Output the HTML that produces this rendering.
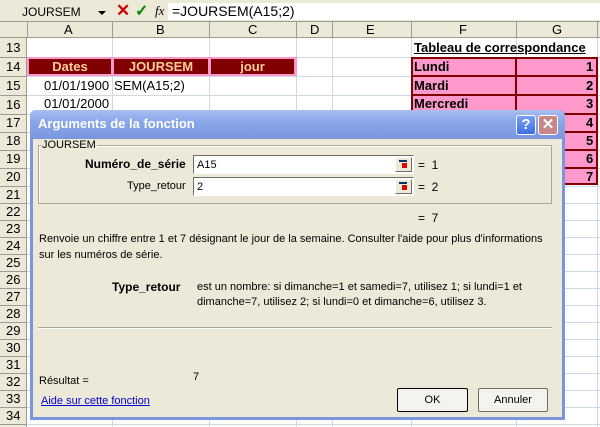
<!DOCTYPE html><html><head><style>
*{margin:0;padding:0;box-sizing:border-box}
body{width:600px;height:427px;overflow:hidden;background:#fff;font-family:"Liberation Sans",Arial,sans-serif;position:relative}
.a{position:absolute}
.t{font-size:11px;color:#000;white-space:nowrap}
.cell{position:absolute;font-size:13px;white-space:nowrap}
.btnicon{position:absolute;width:17px;height:15px;background:#ece9d8;border-left:1px solid #fff;border-top:1px solid #fff;border-right:1px solid #716f64;border-bottom:1px solid #716f64}
</style></head><body>
<div class="a" style="left:0;top:0;width:600px;height:3px;background:#ece9d8"></div>
<div class="a" style="left:0;top:3px;width:600px;height:18px;background:#ece9d8"></div>
<div class="a t" style="left:22px;top:5px;font-size:12px">JOURSEM</div>
<div class="a" style="left:98px;top:11px;border-left:4px solid transparent;border-right:4px solid transparent;border-top:4px solid #000"></div>
<div class="a" style="left:116px;top:1px;font-size:17px;color:#c00;font-weight:bold">✕</div>
<div class="a" style="left:135px;top:1px;font-size:16px;color:#080;font-weight:bold">✓</div>
<div class="a" style="left:155px;top:3px;font-size:13px;font-style:italic;font-family:'Liberation Serif',serif">fx</div>
<div class="a" style="left:168px;top:3px;width:432px;height:17px;background:#fff"></div>
<div class="a" style="left:172px;top:3px;font-size:14px">=JOURSEM(A15;2)</div>
<div class="a" style="left:0;top:21px;width:600px;height:17px;background:#ece9d8;border-bottom:1px solid #9d9c94;border-top:1px solid #9d9c94"></div>
<div class="a" style="left:0;top:38px;width:27px;height:389px;background:#ece9d8;border-right:1px solid #9d9c94"></div>
<svg class="a" style="left:0;top:0" width="600" height="427">
<g stroke="#d0d7e5" stroke-width="1">
<line x1="27" y1="57.5" x2="600" y2="57.5"/><line x1="27" y1="76.5" x2="600" y2="76.5"/><line x1="27" y1="95.5" x2="600" y2="95.5"/><line x1="27" y1="114.5" x2="600" y2="114.5"/>
<line x1="27" y1="132.5" x2="600" y2="132.5"/><line x1="27" y1="150.5" x2="600" y2="150.5"/><line x1="27" y1="168.5" x2="600" y2="168.5"/><line x1="27" y1="186.5" x2="600" y2="186.5"/><line x1="27" y1="203.5" x2="600" y2="203.5"/><line x1="27" y1="220.5" x2="600" y2="220.5"/><line x1="27" y1="237.5" x2="600" y2="237.5"/><line x1="27" y1="254.5" x2="600" y2="254.5"/><line x1="27" y1="271.5" x2="600" y2="271.5"/><line x1="27" y1="288.5" x2="600" y2="288.5"/><line x1="27" y1="305.5" x2="600" y2="305.5"/><line x1="27" y1="322.5" x2="600" y2="322.5"/><line x1="27" y1="339.5" x2="600" y2="339.5"/><line x1="27" y1="356.5" x2="600" y2="356.5"/><line x1="27" y1="373.5" x2="600" y2="373.5"/><line x1="27" y1="390.5" x2="600" y2="390.5"/><line x1="27" y1="407.5" x2="600" y2="407.5"/><line x1="27" y1="424.5" x2="600" y2="424.5"/>
<line x1="112.5" y1="38" x2="112.5" y2="427"/><line x1="209.5" y1="38" x2="209.5" y2="427"/><line x1="296.5" y1="38" x2="296.5" y2="427"/><line x1="332.5" y1="38" x2="332.5" y2="427"/><line x1="411.5" y1="38" x2="411.5" y2="427"/><line x1="516.5" y1="38" x2="516.5" y2="427"/><line x1="597.5" y1="38" x2="597.5" y2="427"/>
</g>
<g stroke="#9d9c94"><line x1="27.5" y1="21" x2="27.5" y2="38"/><line x1="112.5" y1="21" x2="112.5" y2="38"/><line x1="209.5" y1="21" x2="209.5" y2="38"/><line x1="296.5" y1="21" x2="296.5" y2="38"/><line x1="332.5" y1="21" x2="332.5" y2="38"/><line x1="411.5" y1="21" x2="411.5" y2="38"/><line x1="516.5" y1="21" x2="516.5" y2="38"/><line x1="597.5" y1="21" x2="597.5" y2="38"/>
<line x1="0" y1="57.5" x2="27" y2="57.5"/><line x1="0" y1="76.5" x2="27" y2="76.5"/><line x1="0" y1="95.5" x2="27" y2="95.5"/><line x1="0" y1="114.5" x2="27" y2="114.5"/><line x1="0" y1="132.5" x2="27" y2="132.5"/><line x1="0" y1="150.5" x2="27" y2="150.5"/><line x1="0" y1="168.5" x2="27" y2="168.5"/><line x1="0" y1="186.5" x2="27" y2="186.5"/><line x1="0" y1="203.5" x2="27" y2="203.5"/><line x1="0" y1="220.5" x2="27" y2="220.5"/><line x1="0" y1="237.5" x2="27" y2="237.5"/><line x1="0" y1="254.5" x2="27" y2="254.5"/><line x1="0" y1="271.5" x2="27" y2="271.5"/><line x1="0" y1="288.5" x2="27" y2="288.5"/><line x1="0" y1="305.5" x2="27" y2="305.5"/><line x1="0" y1="322.5" x2="27" y2="322.5"/><line x1="0" y1="339.5" x2="27" y2="339.5"/><line x1="0" y1="356.5" x2="27" y2="356.5"/><line x1="0" y1="373.5" x2="27" y2="373.5"/><line x1="0" y1="390.5" x2="27" y2="390.5"/><line x1="0" y1="407.5" x2="27" y2="407.5"/><line x1="0" y1="424.5" x2="27" y2="424.5"/></g>
</svg>
<div class="cell" style="left:64px;top:22px">A</div><div class="cell" style="left:156px;top:22px">B</div><div class="cell" style="left:248px;top:22px">C</div><div class="cell" style="left:310px;top:22px">D</div><div class="cell" style="left:366px;top:22px">E</div><div class="cell" style="left:459px;top:22px">F</div><div class="cell" style="left:552px;top:22px">G</div>
<div class="cell" style="left:6px;top:40px">13</div><div class="cell" style="left:6px;top:59px">14</div><div class="cell" style="left:6px;top:78px">15</div><div class="cell" style="left:6px;top:97px">16</div><div class="cell" style="left:6px;top:115px">17</div>
<div class="cell" style="left:6px;top:133px">18</div><div class="cell" style="left:6px;top:151px">19</div><div class="cell" style="left:6px;top:169px">20</div><div class="cell" style="left:6px;top:187px">21</div><div class="cell" style="left:6px;top:204px">22</div><div class="cell" style="left:6px;top:221px">23</div><div class="cell" style="left:6px;top:238px">24</div><div class="cell" style="left:6px;top:255px">25</div><div class="cell" style="left:6px;top:272px">26</div><div class="cell" style="left:6px;top:289px">27</div>
<div class="cell" style="left:6px;top:306px">28</div><div class="cell" style="left:6px;top:323px">29</div><div class="cell" style="left:6px;top:340px">30</div><div class="cell" style="left:6px;top:357px">31</div><div class="cell" style="left:6px;top:374px">32</div><div class="cell" style="left:6px;top:391px">33</div><div class="cell" style="left:6px;top:408px">34</div>
<div class="a" style="left:27px;top:57px;width:270px;height:19px;background:#ff99cc"></div>
<div class="a" style="left:29px;top:59px;width:82px;height:15px;background:#800000;color:#ffcc99;font-weight:bold;font-size:13px;text-align:center">Dates</div>
<div class="a" style="left:114px;top:59px;width:94px;height:15px;background:#800000;color:#ffcc99;font-weight:bold;font-size:13px;text-align:center">JOURSEM</div>
<div class="a" style="left:211px;top:59px;width:83px;height:15px;background:#800000;color:#ffcc99;font-weight:bold;font-size:13px;text-align:center">jour</div>
<div class="cell" style="left:44px;top:78px">01/01/1900</div><div class="cell" style="left:114px;top:78px">SEM(A15;2)</div>
<div class="cell" style="left:44px;top:96px">01/01/2000</div>
<div class="cell" style="left:414px;top:40px;font-weight:bold;text-decoration:underline">Tableau de correspondance</div>
<div class="a" style="left:411px;top:57px;width:187px;height:128px;background:#ff99cc;border:2px solid #800000"></div>
<svg class="a" style="left:0;top:0" width="600" height="427"><g stroke="#800000" stroke-width="2"><line x1="516" y1="57" x2="516" y2="185"/><line x1="411" y1="76" x2="598" y2="76"/><line x1="411" y1="95" x2="598" y2="95"/><line x1="411" y1="114" x2="598" y2="114"/><line x1="411" y1="132" x2="598" y2="132"/><line x1="411" y1="150" x2="598" y2="150"/><line x1="411" y1="168" x2="598" y2="168"/></g></svg>
<div class="cell" style="left:414px;top:59px;font-weight:bold">Lundi</div><div class="cell" style="left:414px;top:78px;font-weight:bold">Mardi</div><div class="cell" style="left:414px;top:96px;font-weight:bold">Mercredi</div>
<div class="cell" style="left:586px;top:59px;font-weight:bold">1</div><div class="cell" style="left:586px;top:78px;font-weight:bold">2</div><div class="cell" style="left:586px;top:96px;font-weight:bold">3</div><div class="cell" style="left:586px;top:115px;font-weight:bold">4</div><div class="cell" style="left:586px;top:133px;font-weight:bold">5</div><div class="cell" style="left:586px;top:151px;font-weight:bold">6</div><div class="cell" style="left:586px;top:169px;font-weight:bold">7</div>
<div class="a" style="left:30px;top:110px;width:535px;height:310px;background:#ece9d8;border:3px solid #7a96df;border-top:none;border-radius:6px 6px 0 0"></div>
<div class="a" style="left:30px;top:110px;width:535px;height:29px;border-radius:7px 7px 0 0;background:linear-gradient(#a9bdf0,#8aa7ea 40%,#7a96df)"></div>
<div class="a" style="left:38px;top:116px;color:#fff;font-weight:bold;font-size:13px">Arguments de la fonction</div>
<div class="a" style="left:516px;top:115px;width:20px;height:20px;border-radius:3px;border:1px solid #fff;background:linear-gradient(#7aa0f6,#3c6fe0);color:#fff;font-weight:bold;font-size:15px;text-align:center;line-height:18px">?</div>
<div class="a" style="left:538px;top:115px;width:20px;height:20px;border-radius:3px;border:1px solid #fff;background:#c8868a;color:#fff;font-weight:bold;font-size:15px;text-align:center;line-height:18px">✕</div>
<div class="a" style="left:38px;top:145px;width:514px;height:59px;border:1px solid #aca899;box-shadow:1px 1px 0 #fff inset"></div>
<div class="a t" style="left:41px;top:139px;background:#ece9d8;padding:0 1px">JOURSEM</div>
<div class="a t" style="left:85px;top:157px;font-weight:bold;font-size:12px">Numéro_de_série</div>
<div class="a t" style="left:127px;top:180px">Type_retour</div>
<div class="a" style="left:193px;top:155px;width:221px;height:19px;background:#fff;border-top:1px solid #716f64;border-left:1px solid #716f64;border-right:1px solid #fff;border-bottom:1px solid #fff"></div>
<div class="a" style="left:193px;top:177px;width:221px;height:19px;background:#fff;border-top:1px solid #716f64;border-left:1px solid #716f64;border-right:1px solid #fff;border-bottom:1px solid #fff"></div>
<div class="a t" style="left:197px;top:159px">A15</div><div class="a t" style="left:197px;top:181px">2</div>
<div class="btnicon" style="left:395px;top:157px"><div class="a" style="left:3px;top:2px;width:8px;height:2px;background:#036"></div><div class="a" style="left:6px;top:5px;width:5px;height:5px;background:#d00"></div></div>
<div class="btnicon" style="left:395px;top:179px"><div class="a" style="left:3px;top:2px;width:8px;height:2px;background:#036"></div><div class="a" style="left:6px;top:5px;width:5px;height:5px;background:#d00"></div></div>
<div class="a t" style="left:418px;top:158px;font-size:12px">= &nbsp;1</div>
<div class="a t" style="left:418px;top:180px;font-size:12px">= &nbsp;2</div>
<div class="a t" style="left:418px;top:211px;font-size:12px">= &nbsp;7</div>
<div class="a t" style="left:39px;top:231px;line-height:16px">Renvoie un chiffre entre 1 et 7 désignant le jour de la semaine. Consulter l'aide pour plus d'informations<br>sur les numéros de série.</div>
<div class="a t" style="left:112px;top:280px;font-weight:bold;font-size:12px">Type_retour</div>
<div class="a t" style="left:197px;top:280px;line-height:15px">est un nombre: si dimanche=1 et samedi=7, utilisez 1; si lundi=1 et<br>dimanche=7, utilisez 2; si lundi=0 et dimanche=6, utilisez 3.</div>
<div class="a" style="left:38px;top:327px;width:514px;height:2px;border-top:1px solid #aca899;border-bottom:1px solid #fff"></div>
<div class="a t" style="left:39px;top:375px">Résultat =</div>
<div class="a t" style="left:193px;top:371px">7</div>
<div class="a t" style="left:41px;top:395px;color:#00c;text-decoration:underline">Aide sur cette fonction</div>
<div class="a" style="left:397px;top:388px;width:71px;height:24px;background:#f4f3ee;border:1px solid #000;border-radius:2px;font-size:11px;text-align:center;line-height:22px">OK</div>
<div class="a" style="left:478px;top:388px;width:70px;height:24px;background:#f4f3ee;border:1px solid #716f64;border-radius:2px;font-size:11px;text-align:center;line-height:22px">Annuler</div>
</body></html>
